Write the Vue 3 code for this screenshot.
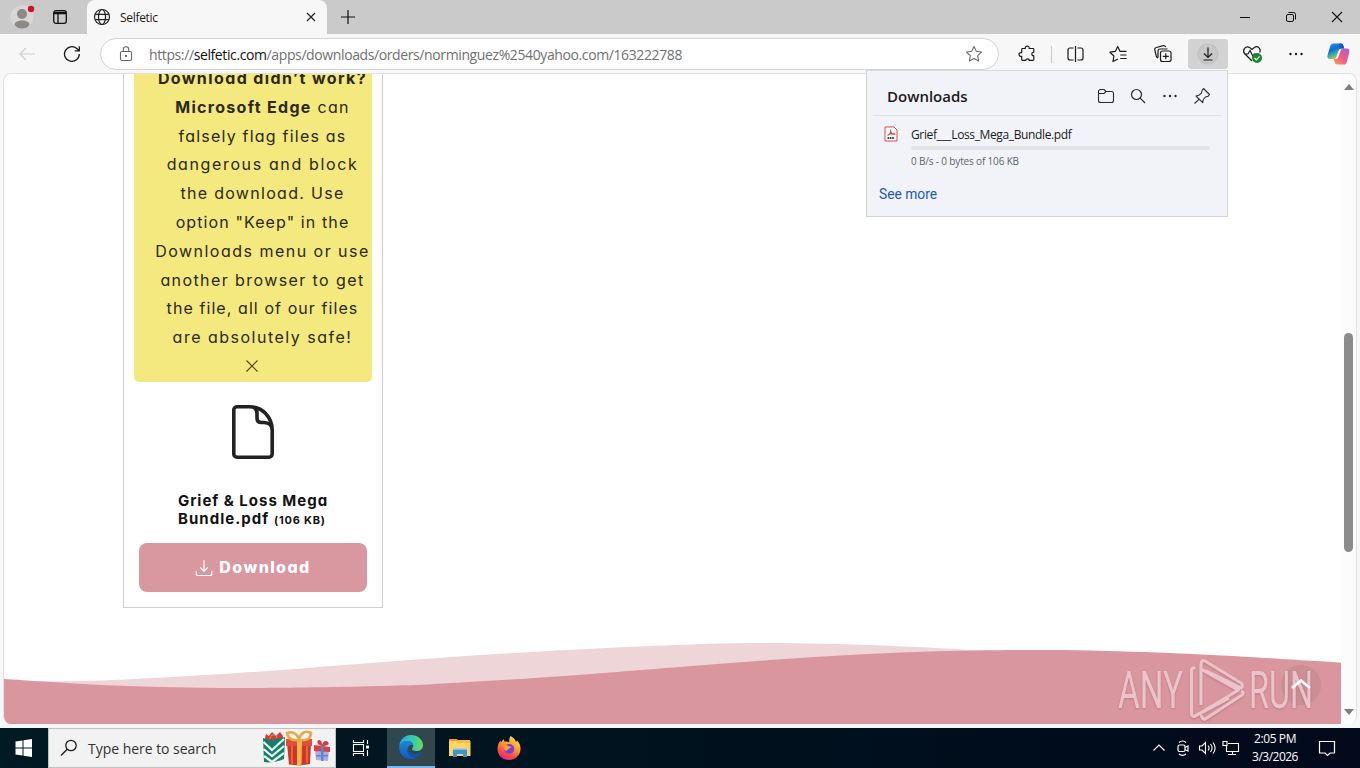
<script setup>
const noticeLines = [
  { bold: 'Download didn’t work?', cls: 'l1' },
  { bold: 'Microsoft Edge', text: ' can', cls: 'l2' },
  { text: 'falsely flag files as', cls: 'l3' },
  { text: 'dangerous and block', cls: 'l4' },
  { text: 'the download. Use', cls: 'l5' },
  { text: 'option "Keep" in the', cls: 'l6' },
  { text: 'Downloads menu or use', cls: 'l7' },
  { text: 'another browser to get', cls: 'l8' },
  { text: 'the file, all of our files', cls: 'l9' },
  { text: 'are absolutely safe!', cls: 'l10' },
]

// Smooth curve through the crest points of a wave, closed along the bottom edge.
function wave(points, bottom) {
  let d = `M${points[0][0]} ${points[0][1]}`
  for (let i = 0; i < points.length - 1; i++) {
    const p0 = points[i - 1] || points[i]
    const p1 = points[i]
    const p2 = points[i + 1]
    const p3 = points[i + 2] || p2
    d += ` C${p1[0] + (p2[0] - p0[0]) / 6} ${p1[1] + (p2[1] - p0[1]) / 6}`
    d += ` ${p2[0] - (p3[0] - p1[0]) / 6} ${p2[1] - (p3[1] - p1[1]) / 6} ${p2[0]} ${p2[1]}`
  }
  return `${d} V${bottom} H${points[0][0]} Z`
}
const backWave = wave([[0, 41], [60, 41.3], [126, 39.3], [256, 31.5], [386, 21.5], [516, 12.7], [603, 8], [680, 4.7], [763, 3], [871, 5.2], [979, 10.5], [1050, 14]], 60)
const frontWave = wave([[0, 39], [110, 45.5], [234, 48], [386, 45.8], [473, 41.5], [560, 36], [676, 27], [763, 20.3], [849, 14.8], [936, 11.3], [1045, 10], [1153, 12.5], [1240, 16.7], [1337, 22.5]], 84)
</script>

<template>
  <div class="screen">
    <header class="tabstrip">
      <div class="profile">
        <svg width="30" height="30" viewBox="0 0 30 30">
          <circle cx="14" cy="15" r="11.5" fill="#d9d7d5" />
          <circle cx="14" cy="12" r="5" fill="#8d8985" />
          <path d="M6.500 23c0-3 3-4.500 7.500-4.500s7.500 1.500 7.500 4.500c-1.500 2.500-4.500 3.500-7.500 3.500S8 25.500 6.500 23z" fill="#8d8985" />
          <circle cx="23" cy="7" r="3.200" fill="#d2102c" />
        </svg>
        <svg class="workspace" width="16" height="16" viewBox="0 0 16 16" fill="none" stroke="#111" stroke-width="1.300">
          <rect x="1.700" y="1.700" width="12.600" height="12.600" rx="2.200" />
          <path d="M2 3.500h12M2 4.500h12M6 5v9" />
        </svg>
      </div>
      <div class="tab">
        <svg width="18" height="18" viewBox="0 0 18 18" fill="none" stroke="#222" stroke-width="1.200">
          <circle cx="9" cy="9" r="7.500" />
          <ellipse cx="9" cy="9" rx="3.500" ry="7.500" />
          <path d="M2.300 6.300h13.400M2.300 11.700h13.400" />
        </svg>
        <span class="tab-title">Selfetic</span>
        <svg width="12" height="12" viewBox="0 0 12 12" stroke="#222" stroke-width="1.200"><path d="M2 2l8 8M10 2l-8 8" /></svg>
      </div>
      <svg class="newtab" width="16" height="16" viewBox="0 0 16 16" stroke="#111" stroke-width="1.200"><path d="M8 1v14M1 8h14" /></svg>
      <div class="winctl">
        <svg width="46" height="34" viewBox="0 0 46 34" stroke="#111" fill="none"><path d="M18 17.500h10" /></svg>
        <svg width="46" height="34" viewBox="0 0 46 34" stroke="#111" fill="none"><rect x="18.500" y="14.500" width="7" height="7" rx="1.500" /><path d="M20.500 12.500h5a2 2 0 0 1 2 2v5" /></svg>
        <svg width="46" height="34" viewBox="0 0 46 34" stroke="#111" fill="none" stroke-width="1.100"><path d="M18 12l10 10M28 12l-10 10" /></svg>
      </div>
    </header>

    <nav class="toolbar">
      <svg class="back" width="18" height="16" viewBox="0 0 18 16" fill="none" stroke="#cdcdcd" stroke-width="1.200"><path d="M17 8H2.500M8 2L2 8l6 6" /></svg>
      <svg class="reload" width="18" height="18" viewBox="0 0 18 18" fill="none" stroke="#1b1b1b" stroke-width="1.300"><path d="M16.300 9a7.400 7.400 0 1 1-2.500-5.500L16 5.500M16.300 1.300v4.500h-4.600" /></svg>
      <div class="address">
        <svg class="lock" width="14" height="16" viewBox="0 0 14 16" fill="none" stroke="#666" stroke-width="1.100"><rect x="1.500" y="5.500" width="11" height="9" rx="1.500" /><path d="M4.300 5.500V3.500a2.700 2.700 0 0 1 5.400 0v2" /><circle cx="7" cy="10" r=".6" fill="#555" /></svg>
        <span class="url">https://<b>selfetic.com</b>/apps/downloads/orders/norminguez%2540yahoo.com/163222788</span>
        <svg class="fav" width="18" height="18" viewBox="0 0 18 18" fill="none" stroke="#6d6d6d" stroke-width="1.100" stroke-linejoin="round"><path d="M9 1.500l2.300 4.800 5.200.7-3.800 3.700.9 5.300L9 13.500 4.400 16l.9-5.300L1.500 7l5.200-.7z" /></svg>
      </div>
      <div class="tools">
        <svg class="tool" viewBox="0 0 44 32" fill="none" stroke="#1b1b1b" stroke-width="1.200" stroke-linejoin="round"><path d="M17.500 10.500h2.800c-.6-3.200 4.400-3.200 3.800 0h3.900a.8.800 0 0 1 .8.800v3c-2.600-.5-2.600 3.800 0 3.300v4a.8.800 0 0 1-.8.800h-3.800c.4-2-3.500-2-3.300 0h-3.400a.8.800 0 0 1-.8-.8v-3.200c-3.600.6-3.600-4.400 0-3.800v-3.300a.8.800 0 0 1 .8-.8z" /></svg>
        <svg class="tool" viewBox="0 0 44 32" fill="none" stroke="#1b1b1b" stroke-width="1.200"><path stroke="#ccc" d="M2.500 8v17" /><g transform="translate(4.500 0)"><path d="M20 10h-3.500a2 2 0 0 0-2 2v8a2 2 0 0 0 2 2H20M24 10h3.500a2 2 0 0 1 2 2v8a2 2 0 0 1-2 2H24M22 8v16" /></g></svg>
        <svg class="tool" viewBox="0 0 44 32" fill="none" stroke="#1b1b1b" stroke-width="1.200" stroke-linejoin="round"><path transform="translate(6.500 -.5)" d="M18.500 21.500L13.500 24l.9-5.500-4-3.800 5.400-.8L18.200 9l2.400 4.900h6.400M20.800 17.500h6.200M20.800 21h6.200" /></svg>
        <svg class="tool" viewBox="0 0 44 32" fill="none" stroke="#1b1b1b" stroke-width="1.200"><g transform="translate(8 -.5)"><rect x="15.500" y="13.500" width="10.500" height="10.500" rx="2" /><path d="M20.800 15.800v6M17.800 18.800h6M13 20.500l-1.500-1-1.700-7a2 2 0 0 1 1.500-2.500l7-1.800a2 2 0 0 1 2.400 1.500M13 20v-6.500a2 2 0 0 1 2-2h7.500" /></g></svg>
        <div class="download-btn">
          <svg width="40" height="30" viewBox="0 0 40 30" fill="none" stroke="#1b1b1b" stroke-width="1.200"><circle cx="20" cy="15" r="10" fill="#c8c8c8" stroke="#c1c1c1" /><path d="M20 8.500v9.500M16 14.500l4 4 4-4M15.500 21h9" /></svg>
        </div>
        <svg class="tool" viewBox="0 0 44 32" fill="none" stroke="#1b1b1b" stroke-width="1.200"><g transform="translate(3 0)"><path d="M21 23l-7.500-7.500c-2.500-3 1-8.500 5.200-6l2.300 2 2.300-2c4-2.500 7 2 5.400 5M13 16h4l2-3.500 3 6 1.500-3" /><circle cx="26" cy="20" r="5" fill="#16882c" stroke="none" /><path d="M23.500 20l1.800 1.800 3.200-3.300" stroke="#fff" /></g></svg>
        <svg class="tool" viewBox="0 0 44 32" fill="#1b1b1b"><circle cx="18.500" cy="16" r="1.200" /><circle cx="24" cy="16" r="1.200" /><circle cx="29.500" cy="16" r="1.200" /></svg>
        <svg class="tool" viewBox="0 0 44 32">
          <defs>
            <linearGradient id="cpa" x1="0" y1="0" x2=".5" y2="1"><stop offset="0" stop-color="#1b9de2" /><stop offset=".45" stop-color="#1769d5" /><stop offset=".7" stop-color="#2fb6a0" /><stop offset="1" stop-color="#e0c33d" /></linearGradient>
            <linearGradient id="cpb" x1="1" y1="0" x2="0" y2="1"><stop offset="0" stop-color="#a65ae0" /><stop offset=".5" stop-color="#ef5b8b" /><stop offset="1" stop-color="#f9a052" /></linearGradient>
          </defs>
          <g transform="translate(.5 0)">
            <path fill="url(#cpa)" d="M17 5.500h7c2 0 2.500 1 3 3l.6 2H25c-1.800 0-2.500.8-3 2.500l-2 5.500c-.6 2-1.500 2.500-3 2.500h-3.500c-2.500 0-3-1.800-2.400-4l2.300-8c.6-2 1.600-3.500 3.600-3.500z" />
            <path fill="url(#cpb)" d="M28 26.500h-7c-2 0-2.500-1-3-3l-.8-2.500H19c1.800 0 2.500-.8 3-2.500l2-5.500c.6-2 1.500-2.500 3-2.500h3.300c2.500 0 3 1.800 2.400 4l-2 8c-.6 2-1.200 4-2.700 4z" />
            <path fill="#1458c8" d="M23 5.500h1.500c1.500 0 2.200 1 2.700 3l.6 2H25c-1 0-1.800.3-2.300 1z" />
          </g>
        </svg>
      </div>
    </nav>

    <main class="viewport">
      <div class="page">
        <section class="card">
          <div class="notice">
            <p v-for="line in noticeLines" :key="line.cls" :class="['line', line.cls]"><b v-if="line.bold">{{ line.bold }}</b>{{ line.text }}</p>
            <svg class="dismiss" width="14" height="14" viewBox="0 0 14 14" stroke="#4a4400" stroke-width="1.100"><path d="M1.500 1.500l11 11M12.500 1.500l-11 11" /></svg>
          </div>
          <svg class="file" width="44" height="56" viewBox="0 0 44 56" fill="none" stroke="#222" stroke-width="3.600" stroke-linejoin="round"><path d="M6 2.800h13C31 2.800 41.200 13 41.200 26v24a3.200 3.200 0 0 1-3.200 3.200H6A3.200 3.200 0 0 1 2.800 50V6A3.200 3.200 0 0 1 6 2.800zM19 2.800c4.500 0 7 2.500 7 7V14c0 3 1.500 4.500 4.500 4.500H33c5 0 8.200 3 8.200 8" /></svg>
          <h2 class="name"><span class="n1">Grief &amp; Loss Mega</span><span class="n2">Bundle.pdf <small>(106 KB)</small></span></h2>
          <button class="get">
            <svg width="18" height="18" viewBox="0 0 18 18" fill="none" stroke="#fff" stroke-width="1.200" stroke-linecap="round" stroke-linejoin="round"><path d="M9 1.500v10.500M5.500 8.800L9 12.200l3.500-3.400M1.200 12.500v2a2 2 0 0 0 2 2h11.600a2 2 0 0 0 2-2v-2" /></svg>
            <span>Download</span>
          </button>
        </section>
        <svg class="waves" width="1337" height="84" viewBox="0 0 1337 84">
          <path :d="backWave" fill="#eed5d8" />
          <path :d="frontWave" fill="#d9969e" />
        </svg>
      </div>
      <div class="scrollbar">
        <i class="up"></i>
        <i class="thumb"></i>
        <i class="down"></i>
      </div>
    </main>

    <footer class="taskbar">
      <svg class="start" width="48" height="40" viewBox="0 0 48 40" fill="#fff"><path d="M15.500 13.500l7-1v7h-7zM23.500 12.300l8.500-1.200v8.400h-8.500zM15.500 20.500h7v7l-7-1zM23.500 20.500H32v8.400l-8.500-1.200z" /></svg>
      <div class="search">
        <svg width="18" height="18" viewBox="0 0 18 18" fill="none" stroke="#1b1b1b" stroke-width="1.300"><circle cx="11" cy="6.500" r="5.200" /><path d="M7.200 10.200L1 16.500" /></svg>
        <span>Type here to search</span>
        <svg class="gifts" width="70" height="38" viewBox="0 0 70 38">
          <path d="M3 9l1-4 3 2 3-4 4 4 4-4 3 4-1 5H4z" fill="#cf3b37" />
          <path d="M1 9l6 2 8-1 8-2-1 22c-7 3-14 4-20 3z" fill="#13806a" />
          <path d="M1.500 13l8.500 8L22 10M1.500 20l8.500 7L22 17M2 27l8 6 12-9" fill="none" stroke="#eef4ee" stroke-width="2.200" />
          <path d="M8 10c0-5 6-6 7-1" fill="none" stroke="#caa06a" />
          <path d="M25 14l24-1-1 22-10 1.500-11-1z" fill="#cf3629" />
          <path d="M24 10h26v7H24z" fill="#e34c37" />
          <path d="M35 10h5l-.5 26H35z" fill="#f2b950" />
          <path d="M30 17v18M45 17v17" stroke="#f0a04a" stroke-width="1" />
          <path d="M37 11c-7 1-11-1-12-7 6-2 10 1 12 6 2-6 6-9 12-6 0 6-5 8-12 7z" fill="none" stroke="#e5ac43" stroke-width="2.600" />
          <path d="M53 20h14l-1 12-12-1z" fill="#b8a6dc" />
          <path d="M52 16l16 2v5l-16-1z" fill="#d9404a" />
          <path d="M59 17h2.500v15H59zM54 26h12v1.500H54z" fill="#4d8fce" />
          <path d="M60 17c-5-1-6-5-3-6 2 0 3 2 3 5 1-4 4-5 6-3s-1 4-6 4z" fill="#cf3b4b" />
        </svg>
      </div>
      <div class="task">
        <svg width="18" height="18" viewBox="0 0 18 18" fill="none" stroke="#fff" stroke-width="1.100"><path d="M1.500 1v2.500h10V1M1.500 17v-2.500h10V17M15.500 1v4M15.500 11v6" /><rect x="1.500" y="5.500" width="10" height="7" /><path d="M14 8h3" stroke-width="3" /></svg>
      </div>
      <div class="task active">
        <svg width="24" height="24" viewBox="0 0 24 24">
          <defs>
            <linearGradient id="eg1" x1="0" x2="1"><stop offset="0" stop-color="#2ba9e5" /><stop offset=".55" stop-color="#32c9b4" /><stop offset="1" stop-color="#6edb57" /></linearGradient>
            <linearGradient id="eg2" x1="0" y1="0" x2="0" y2="1"><stop offset="0" stop-color="#1b87d9" /><stop offset="1" stop-color="#0f5bc0" /></linearGradient>
          </defs>
          <path d="M.3 11C1 4 6 0 12 0c7 0 12 5 12 10 0 4-3 6-6.500 6-3 0-4.500-1-4.500-2 0-.8 1.200-1.300 1.200-3.300C14.200 8 11.500 6 8.500 6 4 6 1 9 .3 11z" fill="url(#eg1)" />
          <path d="M.1 12C.8 8.500 4 6 8 6c3.500 0 6.200 2 6.200 4.500-2.500-2-5.700.5-5.700 4.300 0 4.200 4 8.500 9.500 7.700-1.700 1-3.700 1.500-6 1.500C5 24 0 18.500.1 12z" fill="url(#eg2)" />
          <path d="M8.600 14c-1 4.500 3 9.300 9.200 8.600 2-1 3.700-2.500 4.800-4.200.3-.6-.2-.9-.8-.6C16 20.500 9.500 18.500 8.600 14z" fill="#1550a8" />
        </svg>
      </div>
      <div class="task">
        <svg width="22" height="20" viewBox="0 0 22 20"><path d="M0 1h8l2 2.500H0z" fill="#e6a21f" /><path d="M0 3h21.500v15H0z" fill="#fdd566" /><path d="M9 2h12v3H8z" fill="#f6bd3c" /><path d="M4 19v-7h14v7h-4v-3H8v3z" fill="#3c94d8" /><path d="M4 10.500h14V12H4z" fill="#7cc1ee" /></svg>
      </div>
      <div class="task firefox">
        <svg width="24" height="24" viewBox="0 0 24 24">
          <defs><linearGradient id="ff" x1=".8" y1="0" x2=".3" y2="1"><stop offset="0" stop-color="#ffe14a" /><stop offset=".45" stop-color="#ff9a2b" /><stop offset=".75" stop-color="#ff4a45" /><stop offset="1" stop-color="#e0268d" /></linearGradient></defs>
          <path d="M13.500 0c3 1.500 5 4 5.500 6l1-1.500c3 3 3.700 6 3.500 9C23 19.500 18 24 12 24 5.500 24 .5 19.500.5 13c0-3.500 1-6 3-8.500l.5 2L6.500 3l1 2.800c1.700-.5 3.700-.2 5 .7C12 4 12.300 2 13.500 0z" fill="url(#ff)" />
          <circle cx="12.300" cy="13" r="5" fill="#7d3fd6" />
          <path d="M6 9c2-.8 4 .3 5.500 1.300 2-.2 2.500.5 2.500 1-1 1.500-3 1-3.500 2.700C9 16 6.500 14 6 9z" fill="#ff9f34" />
        </svg>
      </div>
      <div class="tray">
        <svg width="18" height="16" viewBox="-2 0 18 16" fill="none" stroke="#fff" stroke-width="1.200"><path d="M1.500 10.500L7 5l5.500 5.500" /></svg>
        <svg width="18" height="16" viewBox="-2 0 18 16" fill="none" stroke="#fff" stroke-width="1.200"><rect x="2" y="5" width="7" height="6.500" rx="1.500" /><path d="M9 7.500l3-1.500v5l-3-1.500M3 2.500c2-1.800 5-1.800 7 0M3 14c2 1.600 5 1.600 7 0" /></svg>
        <svg width="18" height="16" viewBox="0 0 18 16" fill="none" stroke="#fff" stroke-width="1.100"><path d="M1.500 6v4h2.500l3.500 3.500v-11L4 6zM10 5.500c1.300 1.500 1.300 3.500 0 5M12.500 4c2 2.500 2 5.500 0 8M15 2.500c2.700 3.500 2.700 7.500 0 11" /></svg>
        <svg width="18" height="16" viewBox="0 0 18 16" fill="none" stroke="#fff" stroke-width="1.100"><path d="M6 3.500h10.500v8H4.500V6M10.500 11.500v3M6 14.500h8" /><rect x="1" y="1.500" width="4" height="4" /></svg>
        <div class="clock"><span class="time">2:05 PM</span><span class="date">3/3/2026</span></div>
        <svg width="18" height="18" viewBox="0 0 18 18" fill="none" stroke="#fff" stroke-width="1.200"><path d="M1.500 2.500h15v11.500H12L9.500 16.500 7 14H1.500z" /></svg>
      </div>
    </footer>

    <aside class="downloads">
      <div class="dl-head">
        <h1>Downloads</h1>
        <svg width="18" height="18" viewBox="0 0 18 18" fill="none" stroke="#2a2a2a" stroke-width="1.100"><path d="M1.500 4.500a2 2 0 0 1 2-2H7l2 2h5.500a2 2 0 0 1 2 2v7a2 2 0 0 1-2 2h-11a2 2 0 0 1-2-2zM1.500 6.500H7l2-2" /></svg>
        <svg width="18" height="18" viewBox="0 0 18 18" fill="none" stroke="#2a2a2a" stroke-width="1.200"><circle cx="7.500" cy="7.500" r="5" /><path d="M11.200 11.200L16 16" /></svg>
        <svg width="18" height="18" viewBox="0 0 18 18" fill="#2a2a2a"><circle cx="3.500" cy="9" r="1.200" /><circle cx="9" cy="9" r="1.200" /><circle cx="14.500" cy="9" r="1.200" /></svg>
        <svg width="18" height="18" viewBox="0 0 18 18" fill="none" stroke="#2a2a2a" stroke-width="1.100" stroke-linejoin="round"><path d="M10.500 1.500l6 6-1.500 1.800-2.500.7-2.300 2.500-.5 3.200L3 9l3-.8L8.500 6l.7-3zM6 12.300L1.500 16.500" /></svg>
      </div>
      <div class="dl-item">
        <svg width="14" height="16" viewBox="0 0 14 16" fill="none" stroke="#d94a4a"><path d="M1 1h9l3 3v11H1z" fill="#fff" /><path d="M6.500 3.500c1 3.500-1 5-3 6M6.500 5.500c1 3 3 3 5 2.500M4.500 8.500c2-1 4-1 6.500-.5" stroke-width="1.200" /><path d="M3.500 12h7" stroke="#444" stroke-width="2.200" stroke-dasharray="1.700 .6" /></svg>
        <div class="dl-info">
          <div class="dl-name">Grief___Loss_Mega_Bundle.pdf</div>
          <div class="dl-bar"></div>
          <div class="dl-status">0 B/s - 0 bytes of 106 KB</div>
        </div>
      </div>
      <a class="more">See more</a>
    </aside>

    <svg class="totop" width="42" height="42" viewBox="0 0 42 42"><circle cx="21" cy="21" r="20" fill="#c98c93" opacity=".85" /></svg>
    <svg class="watermark" width="220" height="70" viewBox="0 0 220 70">
      <g class="wm-shade">
        <text x="7" y="53" textLength="65" lengthAdjust="spacingAndGlyphs">ANY</text>
        <text x="138" y="53" textLength="64" lengthAdjust="spacingAndGlyphs">RUN</text>
        <path d="M84 14c-2-2-3.500-1-3.500 2v42c0 3 2 4 4 3l43-26L90 14v36M90 22V9c0-3 2-4 4-3l36 22c2 1.500 2 4 0 5L95 16M84 61l34-18M91 60c-1 3 2 5 4 3.500L131 40c2-1.500 1-3-1-4" fill="none" stroke="#ecc9cd" stroke-width="3.200" stroke-linejoin="round" />
      </g>
    </svg>
    <svg class="arrow" width="22" height="14" viewBox="0 0 22 14" fill="none" stroke="#fff" stroke-width="2.600"><path d="M2 11l9-7.500 9 7.500" /></svg>
  </div>
</template>

<style>
html, body { margin: 0; overflow: hidden; }
</style>

<style scoped>
.screen { position: relative; display: flex; flex-direction: column; width: 1360px; height: 768px; overflow: hidden; background: #f7f7f7; font-family: "Open Sans", "Noto Sans", sans-serif; color: #1b1b1b; }
svg { display: block; flex: none; }
p, h1, h2 { margin: 0; }
.tabstrip { display: flex; height: 34px; flex: none; background: #cacaca; }
.profile { display: flex; width: 87px; box-sizing: border-box; padding: 2px 0 0 8px; }
.workspace { margin: 7px 0 0 14px; }
.tab { display: flex; align-items: center; width: 240px; box-sizing: border-box; padding: 0 10px 0 6px; background: #f7f7f7; border-radius: 8px 8px 0 0; }
.tab-title { flex: 1; margin-left: 9px; font-size: 12px; letter-spacing: -0.3px; }
.newtab { margin: 9px 0 0 13px; }
.winctl { display: flex; margin-left: auto; }
.toolbar { display: flex; align-items: center; height: 39px; flex: none; box-sizing: border-box; padding-top: 1px; }
.back { margin-left: 18px; }
.reload { margin-left: 27px; }
.address { display: flex; align-items: center; width: 899px; height: 32px; box-sizing: border-box; margin-left: 19px; padding: 0 15px 0 18px; background: #fff; border: 1px solid #d3d3d3; border-radius: 16px; }
.url { flex: 1; margin-left: 16px; font-size: 14px; letter-spacing: -0.39px; color: #707070; white-space: nowrap; }
.url b { font-weight: 400; color: #111; }
.tools { display: flex; align-items: center; margin-left: 6px; }
.tool { width: 44px; height: 32px; }
.download-btn { width: 40px; height: 30px; margin-left: 7px; background: #d2d2d2; border-radius: 3px; }
.viewport { display: flex; height: 651px; flex: none; margin: 0 3px; box-sizing: border-box; border: 1px solid #e1e1e1; border-bottom: 0; border-radius: 8px; background: #fff; overflow: hidden; }
.page { display: flex; flex-direction: column; width: 1337px; overflow: hidden; }
.card { display: flex; flex-direction: column; align-items: center; width: 260px; height: 544px; margin: -10px 0 0 119px; box-sizing: border-box; border: 1px solid #cfcfcf; border-top: 0; flex: none; }
.notice, .name, .get { font-family: Inter, "Open Sans", sans-serif; font-feature-settings: "cv11" 1; }
.notice { width: 238px; height: 318px; flex: none; box-sizing: border-box; padding-left: 19px; background: #f4e97f; border-radius: 5px; font-size: 16px; line-height: 28.8px; color: #2b280e; text-align: center; }
.line { height: 28.8px; white-space: nowrap; }
.line b { font-weight: 700; }
.l1 { letter-spacing: 1.4px; }
.l2 { letter-spacing: 1.3px; }
.l3 { letter-spacing: 1.22px; }
.l4 { letter-spacing: 1.63px; }
.l5 { letter-spacing: 1.3px; }
.l6 { letter-spacing: 1.1px; }
.l7 { letter-spacing: 1.48px; }
.l8 { letter-spacing: 1.41px; }
.l9 { letter-spacing: 1.08px; }
.l10 { letter-spacing: 1.5px; }
.dismiss { margin: 7px 0 0 92px; }
.file { margin-top: 22px; flex: none; }
.name { display: flex; flex-direction: column; margin-top: 32px; font-size: 15px; line-height: 18px; font-weight: 700; color: #121212; white-space: nowrap; }
.n1 { letter-spacing: 0.98px; }
.n2 { letter-spacing: 1.05px; }
.name small { font-size: 11px; letter-spacing: 0.8px; }
.get { display: flex; align-items: center; justify-content: center; gap: 6px; width: 228px; height: 49px; margin-top: 14px; padding: 0 0 2px; border: 0; border-radius: 8px; background: #d9979f; color: #fff; font-size: 16px; font-weight: 800; letter-spacing: 1.4px; }
.get svg { margin-top: 2px; }
.waves { margin-top: 32px; }
.scrollbar { display: flex; flex-direction: column; align-items: center; width: 15px; background: #fcfcfc; border-radius: 0 8px 8px 0; }
.up, .down { width: 0; border: 5px solid transparent; }
.up { margin-top: 5px; border-bottom: 6px solid #7e7e7e; }
.thumb { width: 9px; height: 219px; margin-top: 243px; border-radius: 5px; background: #8b8b8b; }
.down { margin-top: 157px; border-top: 6px solid #7e7e7e; }
.taskbar { display: flex; height: 40px; margin-top: 4px; flex: none; background: linear-gradient(90deg, #001a24, #00141f 40%, #000b1b 85%, #020a1c); color: #fff; }
.search { display: flex; align-items: center; width: 288px; box-sizing: border-box; padding-left: 11px; border: 1px solid #c1c1c1; background: #f2f2f2; color: #333; }
.search span { margin-left: 10px; width: 174px; font-size: 14px; letter-spacing: -0.03px; white-space: nowrap; }
.task { display: flex; align-items: center; justify-content: center; width: 49px; }
.task.active { width: 48px; margin-left: 2px; box-sizing: border-box; border-bottom: 2px solid #76b9ed; background: #32464d; }
.tray { display: flex; align-items: center; margin-left: auto; margin-right: 24px; gap: 6px; }
.clock { display: flex; flex-direction: column; align-items: center; width: 58px; margin-right: 8px; font-size: 12px; line-height: 18px; }
.time { letter-spacing: -0.4px; }
.date { letter-spacing: -0.5px; }
.downloads { position: absolute; left: 866px; top: 70px; width: 362px; height: 147px; box-sizing: border-box; background: #f2f3f8; border: 1px solid #d2d3d7; border-top-color: #d9dadd; }
.dl-head { display: flex; align-items: center; height: 45px; margin: 0 6px; padding: 5px 10px 0 14px; box-sizing: border-box; gap: 14px; border-bottom: 1px solid #e0e1e5; }
.dl-head h1 { flex: 1; font-size: 15px; font-weight: 600; letter-spacing: 0; line-height: 20px; }
.dl-item { display: flex; padding: 10px 17px 0 17px; gap: 13px; }
.dl-info { flex: 1; }
.dl-name { font-size: 12px; line-height: 18px; letter-spacing: -0.37px; }
.dl-bar { height: 4px; margin-top: 2px; background: #e3e4e8; border-radius: 2px; }
.dl-status { margin-top: 4px; font-size: 10px; line-height: 14px; letter-spacing: -0.16px; color: #5f6368; }
.more { display: block; margin: 17px 0 0 12px; font-family: Roboto, "Liberation Sans", sans-serif; font-size: 13.800px; line-height: 18px; color: #2358b5; }
.totop { position: absolute; left: 1280px; top: 664px; }
.arrow { position: absolute; left: 1290px; top: 677px; }
.watermark { position: absolute; left: 1111px; top: 655px; }
.watermark text { font-family: Roboto, sans-serif; font-size: 52px; font-weight: 400; fill: #ecc9cd; }
.wm-shade { filter: drop-shadow(0 1px 1px rgba(120, 60, 70, 0.35)); opacity: 0.9; }
</style>
